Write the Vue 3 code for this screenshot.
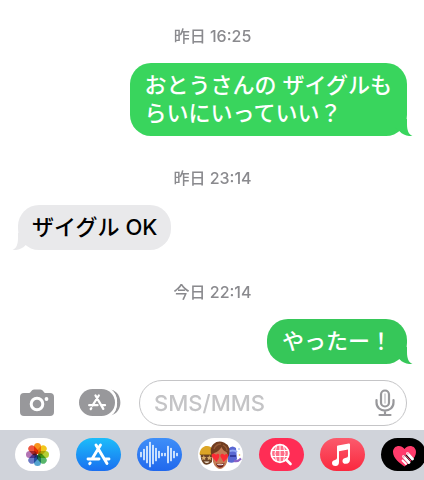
<script setup>
import { ref } from 'vue'

const draft = ref('')

const messages = [
  { time: '昨日 16:25', side: 'sent', tone: 'light', lines: ['おとうさんの ザイグルも', 'らいにいっていい？'] },
  { time: '昨日 23:14', side: 'received', tone: 'gray', lines: ['ザイグル OK'] },
  { time: '今日 22:14', side: 'sent', tone: 'deep', lines: ['やったー！'] }
]

const petals = [
  { angle: 0, color: '#f7941d' },
  { angle: 45, color: '#f2c61b' },
  { angle: 90, color: '#b5cf35' },
  { angle: 135, color: '#58b66b' },
  { angle: 180, color: '#54a3cf' },
  { angle: 225, color: '#6a78c4' },
  { angle: 270, color: '#b273b3' },
  { angle: 315, color: '#ec5540' }
]

const waves = [
  [4, 2], [7, 5], [10, 8], [13, 12], [16, 9], [19, 6], [22, 3], [25, 1],
  [28, 1], [31, 8], [34, 6], [37, 3], [40, 1]
]
</script>

<template>
  <div class="screen">
    <main class="thread">
      <section v-for="m in messages" :key="m.time" class="group">
        <time class="stamp">{{ m.time }}</time>
        <div class="bubble" :class="[m.side, m.tone]">
          <p v-for="line in m.lines" :key="line">{{ line }}</p>
          <svg class="tail" viewBox="0 0 20 17" aria-hidden="true">
            <path d="M0 0H13V5C13 11 14.500 15.500 18.500 17C14 17.500 9 16 5.500 12.200L0 8Z" fill="currentColor" />
          </svg>
        </div>
      </section>
    </main>

    <form class="composer" @submit.prevent>
      <button type="button" class="tool" aria-label="カメラ">
        <svg width="34" height="28" viewBox="0 0 34 28">
          <path d="M4 4H9Q10 4 11 2.500Q12.300 .5 14 .5H20.500Q22.200 .5 23.500 2.500Q24.300 4 25.500 4H30Q34 4 34 8V23Q34 27 30 27H4Q0 27 0 23V8Q0 4 4 4Z" fill="#98989b" />
          <circle cx="17" cy="15" r="5.800" fill="none" stroke="#fff" stroke-width="3" />
          <circle cx="26.500" cy="10" r="1.900" fill="#fff" />
        </svg>
      </button>
      <button type="button" class="tool" aria-label="アプリ">
        <svg width="42" height="28" viewBox="0 0 42 28">
          <rect x="0" y="0" width="36" height="27" rx="13.500" fill="#98989b" />
          <path d="M32 .8C40 4.500 40 22.500 32 26.200C44.500 24 44.500 3 32 .8Z" fill="#98989b" />
          <path d="M31 .8C39.500 5 39.500 22 31 26.200" fill="none" stroke="#fff" stroke-width="1.500" />
          <g fill="none" stroke="#fff" stroke-width="2.300" stroke-linecap="round">
            <path d="M19.800 6.500L13.500 16.500M16.500 6.500L24.300 19.800M10.200 16.200H18.500M23.300 16.200H26M12.200 19.300L11.700 20" />
          </g>
        </svg>
      </button>
      <div class="field">
        <input v-model="draft" type="text" placeholder="SMS/MMS" aria-label="SMS/MMS" />
        <button type="button" class="mic" aria-label="音声入力">
          <svg width="20" height="28" viewBox="0 0 20 28" fill="none" stroke="#98989b" stroke-width="2.200" stroke-linecap="round">
            <rect x="6" y="1.500" width="8" height="16" rx="4" />
            <path d="M1.500 11V13.500C1.500 24.200 18.500 24.200 18.500 13.500V11M10 22V26M4.500 26H15.500" />
            <path d="M10 5V14" stroke="#c9c9cb" stroke-width="1.500" />
          </svg>
        </button>
      </div>
    </form>

    <nav class="apps" aria-label="アプリ一覧">
      <button type="button" class="app photos" aria-label="写真">
        <svg viewBox="0 0 45 33">
          <g class="petals">
            <rect v-for="p in petals" :key="p.angle" x="19" y="5" width="7" height="11" rx="3.500" :fill="p.color" :transform="`rotate(${p.angle} 22.500 16.500)`" />
          </g>
        </svg>
      </button>

      <button type="button" class="app store" aria-label="App Store">
        <svg viewBox="0 0 45 33" fill="none" stroke="#fff" stroke-width="2.900" stroke-linecap="round">
          <path d="M24.500 7L16 21M20 7L31 25.500M12 21H23M29 21H33M14.200 25L13.700 25.700" />
        </svg>
      </button>

      <button type="button" class="app audio" aria-label="オーディオ">
        <svg viewBox="0 0 45 33" stroke="#e4f2ff" stroke-width="1.700" stroke-linecap="round">
          <line v-for="w in waves" :key="w[0]" :x1="w[0]" :x2="w[0]" :y1="16.5 - w[1]" :y2="16.5 + w[1]" />
        </svg>
      </button>

      <button type="button" class="app memoji" aria-label="ミー文字">
        <svg viewBox="0 0 45 33">
          <path d="M2.500 15H14V24Q10 28 6 26Q2.500 23 2.500 15Z" fill="#6b4326" />
          <path d="M1.500 16.500C2 6 13 6 15 12V17Z" fill="#dca526" />
          <path d="M2 16.500H14" stroke="#a8781a" stroke-width="1.200" />
          <path d="M5.800 17L6.600 19L8.500 19.300L7 20.500L7.300 22.300L5.800 21.300L4.200 22.300L4.500 20.500L3 19.300L5 19ZM11.300 17L12 19L14 19.300L12.600 20.500L13 22.300L11.300 21.300L9.700 22.300L10 20.500L8.800 19.300L10.600 19Z" fill="#d8ad6b" />
          <path d="M6 23.500H11.500Q9 26.500 6 23.500Z" fill="#f4e6d4" />
          <path d="M30 11Q34 6.500 38 10L39 21Q36 26.500 30 24Z" fill="#5a68d3" />
          <path d="M30 14Q35 11 39 14" fill="none" stroke="#91a8f4" stroke-width="2" />
          <path d="M32 18H38" stroke="#333a9d" stroke-width="2" />
          <path d="M36 23Q40 24 43 20.500" fill="none" stroke="#8b62c6" stroke-width="2" />
          <circle cx="41" cy="11" r=".8" fill="#8cabef" />
          <circle cx="41.500" cy="17" r=".8" fill="#e8a93b" />
          <path d="M14.500 16Q14 26 18 29Q22 33 26 29Q30 26 30 16L28 9H17Z" fill="#c47c55" />
          <path d="M14 19Q10.500 10 15.500 6Q20 2 26 4.500Q34 8 30.500 19L28.500 14Q25 13 23.500 9Q20.500 14 16 15Z" fill="#713d20" />
          <path d="M16 11Q18 6 23 6M25 7Q29 9 29 13" fill="none" stroke="#965a35" stroke-width="1.300" />
          <path d="M18.600 24L14 19Q12.800 15.800 15.800 15.600Q17.500 15.700 18 17Q19.500 14.700 21.200 16.500Q22 19 18.600 24Z" fill="#fb2b34" />
          <path d="M25.500 24L22.400 18.500Q22 15.800 24.500 15.800Q25.800 16 26.300 17.200Q28.300 14.800 30 16.800Q31 19.500 25.500 24Z" fill="#fb2b34" />
          <path d="M18 25.500Q22 26.500 26.500 25Q25.500 29.500 22.300 29.500Q19 29.500 18 25.500Z" fill="#681e1b" />
          <path d="M19 26Q22 26.700 25.700 25.800L25 26.900Q22 27.500 19.500 26.900Z" fill="#fff" />
        </svg>
      </button>

      <button type="button" class="app search" aria-label="画像検索">
        <svg viewBox="0 0 45 33" fill="none" stroke="#fff" stroke-width="1">
          <circle cx="21" cy="15.500" r="8.800" stroke-width="1.800" fill="#ff6e88" />
          <path d="M13 12.500H29M12.500 18.500H29.500M21 7V24M17.500 7.500Q14.500 15.500 17.500 23.500M24.500 7.500Q27.500 15.500 24.500 23.500" />
          <path d="M27.500 22L31.500 26" stroke-width="2.600" stroke-linecap="round" />
        </svg>
      </button>

      <button type="button" class="app music" aria-label="ミュージック">
        <svg viewBox="0 0 45 33" fill="#fff">
          <path d="M17 8.500Q17 7.700 18 7.500L28.800 5.500Q30 5.300 30 6.500V21.500Q30 25.500 26 25.800Q22.500 26 22.500 23Q22.500 20.300 26 19.800Q28 19.500 28 18V11.500L19 13.300V24Q19 27.800 15.500 28Q12 28 12 25Q12 22.500 15 22Q17 21.700 17 20Z" />
        </svg>
      </button>

      <button type="button" class="app touch" aria-label="Digital Touch">
        <svg viewBox="0 0 45 33">
          <path d="M23.500 28.500C19 25.500 12 20 12 14C12 7.500 20 6 23.500 11C27 6 35 7.500 35 14C35 20 28 25.500 23.500 28.500Z" fill="#ff3b6b" />
          <path d="M22.500 18L28.500 24.500M26 16L32 22" stroke="#000" stroke-width="3.200" />
          <path d="M22.500 18.500L28 24.500M26.500 15.500L31.500 21" stroke="#fff" stroke-width="2.900" stroke-linecap="round" />
          <path d="M21.500 22.500L25 26" stroke="#fff" stroke-width="1.800" stroke-linecap="round" />
          <path d="M22 18L23 19M26 15L27 16" stroke="#ff9db4" stroke-width="1.500" stroke-linecap="round" />
        </svg>
      </button>
    </nav>
  </div>
</template>

<style>
body {
  margin: 0;
  background: #fff;
}
</style>

<style scoped>
.screen {
  display: flex;
  flex-direction: column;
  min-height: 100vh;
  overflow: hidden;
  font-family: Inter, "Noto Sans CJK JP", sans-serif;
}

button {
  display: flex;
  flex: none;
  padding: 0;
  border: 0;
  background: none;
  cursor: pointer;
}

svg {
  display: block;
}

.thread {
  display: flex;
  flex: 1;
  flex-direction: column;
  gap: 32px;
  padding: 26px 17px 16px 18px;
}

.group {
  display: flex;
  flex-direction: column;
  gap: 17px;
}

.stamp {
  align-self: center;
  color: #8a8a8e;
  font-size: 16px;
  font-weight: 500;
  line-height: 20px;
}

.bubble {
  position: relative;
  padding: 8px 14px 9px;
  border-radius: 21px;
  font-size: 22px;
  font-weight: 500;
  line-height: 28px;
}

.bubble p {
  margin: 0;
}

.sent {
  align-self: flex-end;
  padding-right: 15px;
  padding-left: 15px;
  color: #fff;
}

.received {
  align-self: flex-start;
  color: #000;
}

.light {
  background: #39d55d;
}

.deep {
  background: #36c759;
}

.gray {
  background: #e9e9eb;
}

.tail {
  position: absolute;
  right: -7px;
  bottom: 0;
  width: 20px;
  height: 17px;
}

.light .tail {
  color: #39d55d;
}

.deep .tail {
  color: #36c759;
}

.gray .tail {
  right: auto;
  left: -7px;
  color: #e9e9eb;
  transform: scaleX(-1);
}

.composer {
  display: flex;
  align-items: center;
  padding: 0 17px 4px 20px;
}

.tool + .tool {
  margin-left: 25px;
}

.field {
  display: flex;
  flex: 1;
  align-items: center;
  box-sizing: border-box;
  min-width: 0;
  height: 46px;
  margin-left: 18px;
  padding: 0 11px 0 14px;
  border: 1px solid #c5c5c7;
  border-radius: 23px;
}

.field input {
  flex: 1;
  min-width: 0;
  padding: 0;
  border: 0;
  outline: 0;
  background: none;
  font: 500 22px/28px Inter, "Noto Sans CJK JP", sans-serif;
}

.field input::placeholder {
  color: #c4c4c6;
  opacity: 1;
}

.apps {
  display: flex;
  gap: 16px;
  overflow: hidden;
  padding: 8px 0 9px 15px;
  background: #d0d3da;
}

.app {
  width: 45px;
  height: 33px;
  overflow: hidden;
  border-radius: 17px;
}

.app svg {
  width: 45px;
  height: 33px;
}

.photos,
.memoji {
  background: #fff;
}

.petals {
  isolation: isolate;
}

.petals rect {
  mix-blend-mode: multiply;
}

.store {
  background: linear-gradient(#1cbdfa, #1a6ff0);
}

.audio {
  background: linear-gradient(#3f8ff8, #2068ed);
}

.search {
  background: #ff2d55;
}

.music {
  background: linear-gradient(#fb5b6d, #fa283e);
}

.touch {
  background: #000;
}
</style>
